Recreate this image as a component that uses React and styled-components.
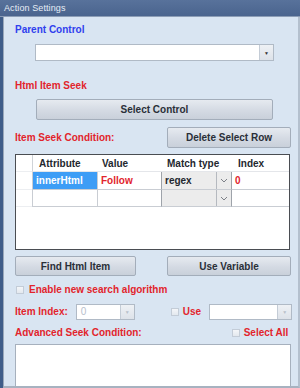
import React from "react";
import styled, { createGlobalStyle } from "styled-components";

const Global = createGlobalStyle`
  html, body { margin: 0; padding: 0; background: #d9e5f2; }
  body { font-family: "Liberation Sans", Arial, sans-serif; }
`;

const Window = styled.div`
  width: 300px;
  height: 388px;
  overflow: hidden;
  display: flex;
  flex-direction: column;
  background: #3f5d89;
`;

const TitleBar = styled.div`
  height: 16px;
  flex: none;
  display: flex;
  align-items: center;
  padding-left: 4px;
  background: linear-gradient(#58729b, #4a648e);
  color: #e6edf6;
  font-size: 9px;
  letter-spacing: 0.1px;
  border-bottom: 1px solid #8c9db6;
`;

const Frame = styled.div`
  flex: 1;
  display: flex;
  border-left: 3px solid #3f5d89;
  min-height: 0;
`;

const Panel = styled.div`
  flex: 1;
  display: flex;
  flex-direction: column;
  background: #d9e5f2;
  border-left: 1px solid #9aa8ba;
  border-right: 2px solid #b4c0ce;
  border-bottom: 2px solid #a7b2c0;
  padding: 6px 7px 0 11px;
  overflow: hidden;
`;

const Label = styled.div`
  font-size: 10px;
  font-weight: bold;
  line-height: 14px;
  color: ${(p) => (p.blue ? "#2f40ee" : "#e2242c")};
  white-space: nowrap;
`;

const Combo = styled.div`
  display: flex;
  height: ${(p) => p.h || 17}px;
  width: ${(p) => p.w}px;
  margin-left: ${(p) => p.ml || 0}px;
  border: 1px solid #b0bac6;
  background: #fff;
  box-sizing: border-box;
  flex: none;
`;

const ComboText = styled.div`
  flex: 1;
  font-size: 10px;
  line-height: 14px;
  padding-left: 4px;
  color: #b8c0cc;
`;

const ComboArrow = styled.div`
  width: 13px;
  display: flex;
  align-items: center;
  justify-content: center;
  background: linear-gradient(#eef1f5, #dde2e9);
  border-left: 1px solid #c4ccd6;
  color: ${(p) => (p.dim ? "#b8c0ca" : "#333")};
  font-size: 5px;
`;

const Button = styled.button`
  height: ${(p) => p.h || 21}px;
  width: ${(p) => p.w}px;
  margin-left: ${(p) => p.ml || 0}px;
  padding: 0;
  flex: none;
  box-sizing: border-box;
  border: 1px solid #a3adba;
  border-radius: 2px;
  background: linear-gradient(#e6eaf0, #d4dae3 55%, #c9d0da);
  font-family: "Liberation Sans", Arial, sans-serif;
  font-size: 10px;
  font-weight: bold;
  color: #2a2f38;
`;

const Row = styled.div`
  display: flex;
  align-items: center;
  justify-content: ${(p) => p.justify || "flex-start"};
  margin-top: ${(p) => p.mt || 0}px;
  height: ${(p) => p.h}px;
  flex: none;
`;

const Table = styled.div`
  margin-top: 6px;
  width: 275px;
  height: 96px;
  flex: none;
  box-sizing: border-box;
  border: 1px solid #4a4d52;
  background: #fff;
  display: grid;
  grid-template-columns: 16px 65px 64px 71px 1fr;
  grid-template-rows: 17px 18px 17px 1fr;
`;

const HeadCell = styled.div`
  font-size: 10px;
  font-weight: bold;
  color: #23272e;
  line-height: 17px;
  padding-left: ${(p) => p.pl || 0}px;
  border-bottom: 1px solid #e4e6ea;
  border-left: ${(p) => (p.line ? "1px solid #cfd3d8" : "none")};
  box-sizing: border-box;
`;

const RowHead = styled.div`
  border-bottom: 1px solid #eceef1;
`;

const Cell = styled.div`
  box-sizing: border-box;
  border-left: ${(p) => (p.noLeft ? "none" : "1px solid #c9cdd3")};
  border-bottom: 1px solid #c9cdd3;
  font-size: 10px;
  font-weight: bold;
  line-height: 16px;
  padding-left: 3px;
  color: ${(p) => p.color || "#23272e"};
  background: ${(p) => p.bg || "#fff"};
  display: flex;
  align-items: center;
`;

const SelectCell = styled(Cell)`
  padding-left: 0;
  background: #ececec;
  border-left: 1px solid #9ea3aa;
  border-right: 1px solid #9ea3aa;
`;

const SelectText = styled.div`
  flex: 1;
  padding-left: 3px;
`;

const SelectArrow = styled.div`
  width: 14px;
  align-self: stretch;
  border-left: 1px solid #b5b9bf;
  display: flex;
  align-items: center;
  justify-content: center;
`;

const Check = styled.span`
  width: 8px;
  height: 8px;
  box-sizing: border-box;
  border: 1px solid #c3ccd7;
  background: linear-gradient(#f4f6f9, #e3e8ee);
  margin-right: ${(p) => p.mr || 4}px;
  margin-left: ${(p) => p.ml || 0}px;
  flex: none;
`;

const TextArea = styled.div`
  margin-top: 4px;
  width: 276px;
  height: 80px;
  flex: none;
  box-sizing: border-box;
  border: 1px solid #a6b0bd;
  background: #fff;
`;

const Chevron = () => (
  <svg width="8" height="5" viewBox="0 0 8 5">
    <path d="M1 1 L4 4 L7 1" fill="none" stroke="#7d8188" strokeWidth="1" />
  </svg>
);

export default function App() {
  return (
    <>
      <Global />
      <Window>
        <TitleBar>Action Settings</TitleBar>
        <Frame>
          <Panel>
            <Label blue>Parent Control</Label>
            <Row mt={7} h={17}>
              <Combo w={239} ml={20}>
                <ComboText />
                <ComboArrow>▼</ComboArrow>
              </Combo>
            </Row>
            <Row mt={18} h={14}>
              <Label>Html Item Seek</Label>
            </Row>
            <Row mt={6} h={21}>
              <Button w={237} ml={21}>Select Control</Button>
            </Row>
            <Row mt={7} h={21} justify="space-between">
              <Label>Item Seek Condition:</Label>
              <Button w={124}>Delete Select Row</Button>
            </Row>
            <Table>
              <RowHead />
              <HeadCell line pl={6}>Attribute</HeadCell>
              <HeadCell pl={5}>Value</HeadCell>
              <HeadCell pl={6}>Match type</HeadCell>
              <HeadCell pl={6}>Index</HeadCell>

              <RowHead />
              <Cell bg="#3d9df6" color="#fff">innerHtml</Cell>
              <Cell color="#e2242c">Follow</Cell>
              <SelectCell>
                <SelectText>regex</SelectText>
                <SelectArrow><Chevron /></SelectArrow>
              </SelectCell>
              <Cell color="#e2242c" noLeft>0</Cell>

              <RowHead />
              <Cell />
              <Cell />
              <SelectCell>
                <SelectText />
                <SelectArrow><Chevron /></SelectArrow>
              </SelectCell>
              <Cell noLeft />
            </Table>
            <Row mt={6} h={20} justify="space-between">
              <Button w={121} h={20}>Find Html Item</Button>
              <Button w={124} h={20}>Use Variable</Button>
            </Row>
            <Row mt={7} h={14}>
              <Check ml={1} mr={5} />
              <Label>Enable new search algorithm</Label>
            </Row>
            <Row mt={7} h={16}>
              <Label>Item Index:</Label>
              <Combo w={59} h={16} ml={8}>
                <ComboText>0</ComboText>
                <ComboArrow dim>▼</ComboArrow>
              </Combo>
              <Check ml={36} mr={4} />
              <Label>Use</Label>
              <Combo w={83} h={16} ml={8}>
                <ComboText />
                <ComboArrow dim>▼</ComboArrow>
              </Combo>
            </Row>
            <Row mt={6} h={14}>
              <Label>Advanced Seek Condition:</Label>
              <Check ml={90} mr={4} />
              <Label>Select All</Label>
            </Row>
            <TextArea />
          </Panel>
        </Frame>
      </Window>
    </>
  );
}
